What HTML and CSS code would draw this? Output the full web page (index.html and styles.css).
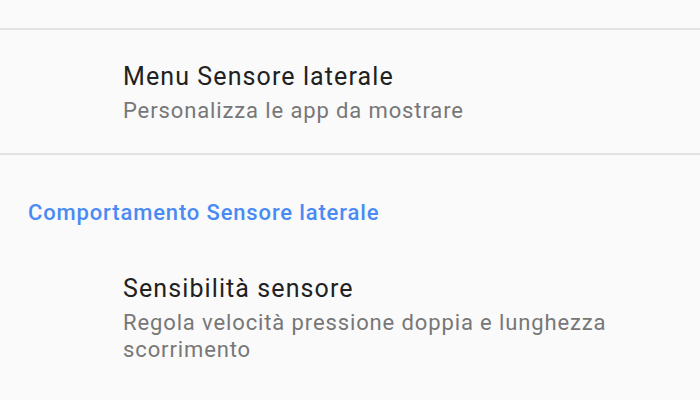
FILE: index.html
```html
<!DOCTYPE html>
<html>
<head>
<meta charset="utf-8">
<link rel="stylesheet" href="styles.css">
</head>
<body>
<div class="screen">
  <div class="top-space"></div>
  <div class="divider"></div>
  <div class="item item-first">
    <div class="title">Menu Sensore laterale</div>
    <div class="summary">Personalizza le app da mostrare</div>
  </div>
  <div class="divider"></div>
  <div class="category">Comportamento Sensore laterale</div>
  <div class="item item-second">
    <div class="title">Sensibilità sensore</div>
    <div class="summary">Regola velocità pressione doppia e lunghezza scorrimento</div>
  </div>
</div>
</body>
</html>
```
FILE: styles.css
```css
html, body {
  margin: 0;
  padding: 0;
  background: #fafafa;
}
.screen {
  width: 700px;
  height: 400px;
  overflow: hidden;
  font-family: Roboto, "Liberation Sans", sans-serif;
  display: flex;
  flex-direction: column;
}
.top-space {
  height: 28px;
  flex: none;
}
.divider {
  height: 2px;
  background: #e2e2e2;
  flex: none;
}
.item {
  padding: 0 80px 0 123px;
  flex: none;
}
.item-first {
  padding-top: 31px;
  height: 92px;
}
.item-second {
  padding-top: 47px;
}
.title {
  font-size: 25px;
  line-height: 32px;
  letter-spacing: 1.1px;
  color: #212121;
}
.summary {
  font-size: 22px;
  line-height: 27px;
  letter-spacing: 0.88px;
  color: #777777;
  margin-top: 4px;
}
.category {
  padding: 45px 0 0 28px;
  font-size: 22px;
  font-weight: 500;
  letter-spacing: 0.85px;
  color: #4a8af4;
  line-height: 26px;
  flex: none;
}
```
